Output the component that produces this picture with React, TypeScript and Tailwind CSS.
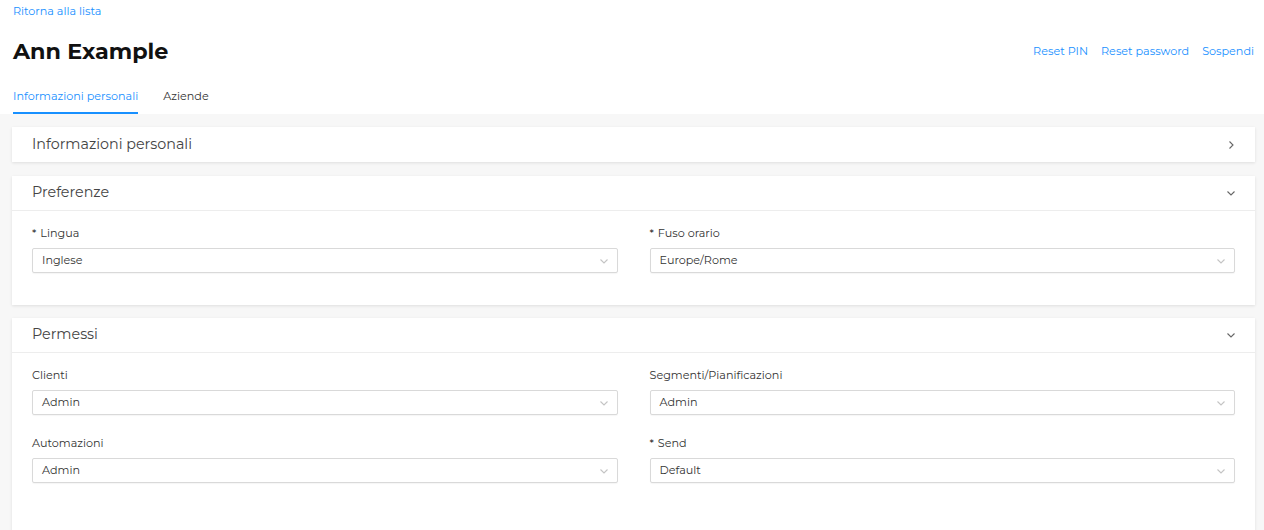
import React from "react";

const Chevron = ({ dir, className }: { dir: "down" | "right"; className?: string }) => (
  <svg width="10" height="10" viewBox="0 0 10 10" className={className} fill="none" stroke="currentColor" strokeWidth="1.1">
    {dir === "down" ? <path d="M1.5 3.5 L5 7 L8.5 3.5" /> : <path d="M3.5 1.5 L7 5 L3.5 8.5" />}
  </svg>
);

const Field = ({ label, value, required }: { label: string; value: string; required?: boolean }) => (
  <div className="mb-[18px]">
    <div className="text-[11.2px] leading-[20px] text-[#333] mb-[5px]">
      {required && <span className="mr-[4px] text-[#222]">*</span>}
      {label}
    </div>
    <div className="h-[25px] flex items-center justify-between border border-[#d9d9d9] rounded-[2px] bg-white pl-[9px] pr-[8px] shadow-[0_1px_1px_rgba(0,0,0,0.04)]">
      <span className="text-[11.2px] text-[#333]">{value}</span>
      <Chevron dir="down" className="text-[#c4c4c4]" />
    </div>
  </div>
);

const Card = ({ title, open, className, children }: { title: string; open: boolean; className?: string; children?: React.ReactNode }) => (
  <div className={"bg-white shadow-[0_1px_3px_rgba(0,0,0,0.1)] " + (className ?? "")}>
    <div className={"h-[35px] flex items-center justify-between pl-5 pr-[19px] " + (open ? "border-b border-[#ededed]" : "")}>
      <span className="text-[14.3px] text-[#444]">{title}</span>
      <Chevron dir={open ? "down" : "right"} className="text-[#666]" />
    </div>
    {open && <div className="px-5 pt-[12px]">{children}</div>}
  </div>
);

export default function App() {
  return (
    <div className="min-h-screen bg-white font-['Montserrat','Inter',sans-serif]">
      <div className="pl-[13px] pr-[10px]">
        <div className="pt-[2px] text-[11.2px] leading-[18px] text-[#1890ff]">Ritorna alla lista</div>
        <div className="mt-[16px] flex items-center justify-between">
          <h1 className="text-[22.3px] font-bold leading-[30px] text-[#111]">Ann Example</h1>
          <div className="flex gap-[13px] text-[11.2px] text-[#1890ff]">
            <span>Reset PIN</span>
            <span>Reset password</span>
            <span>Sospendi</span>
          </div>
        </div>
        <div className="mt-[14px] flex gap-[25px] text-[11.2px] leading-[18px]">
          <div className="pt-[7px] pb-[7px] border-b-2 border-[#1890ff] text-[#1890ff]">Informazioni personali</div>
          <div className="pt-[7px] pb-[7px] border-b-2 border-transparent text-[#333]">Aziende</div>
        </div>
      </div>
      <div className="bg-[#f7f7f7] pl-3 pr-[9px] pt-[13px]">
        <Card title="Informazioni personali" open={false} className="mb-[14px]" />
        <Card title="Preferenze" open className="mb-[13px] pb-[14px]">
          <div className="grid grid-cols-2 gap-x-8">
            <Field label="Lingua" value="Inglese" required />
            <Field label="Fuso orario" value="Europe/Rome" required />
          </div>
        </Card>
        <Card title="Permessi" open className="pb-[40px]">
          <div className="grid grid-cols-2 gap-x-8">
            <Field label="Clienti" value="Admin" />
            <Field label="Segmenti/Pianificazioni" value="Admin" />
            <Field label="Automazioni" value="Admin" />
            <Field label="Send" value="Default" required />
          </div>
        </Card>
      </div>
    </div>
  );
}
